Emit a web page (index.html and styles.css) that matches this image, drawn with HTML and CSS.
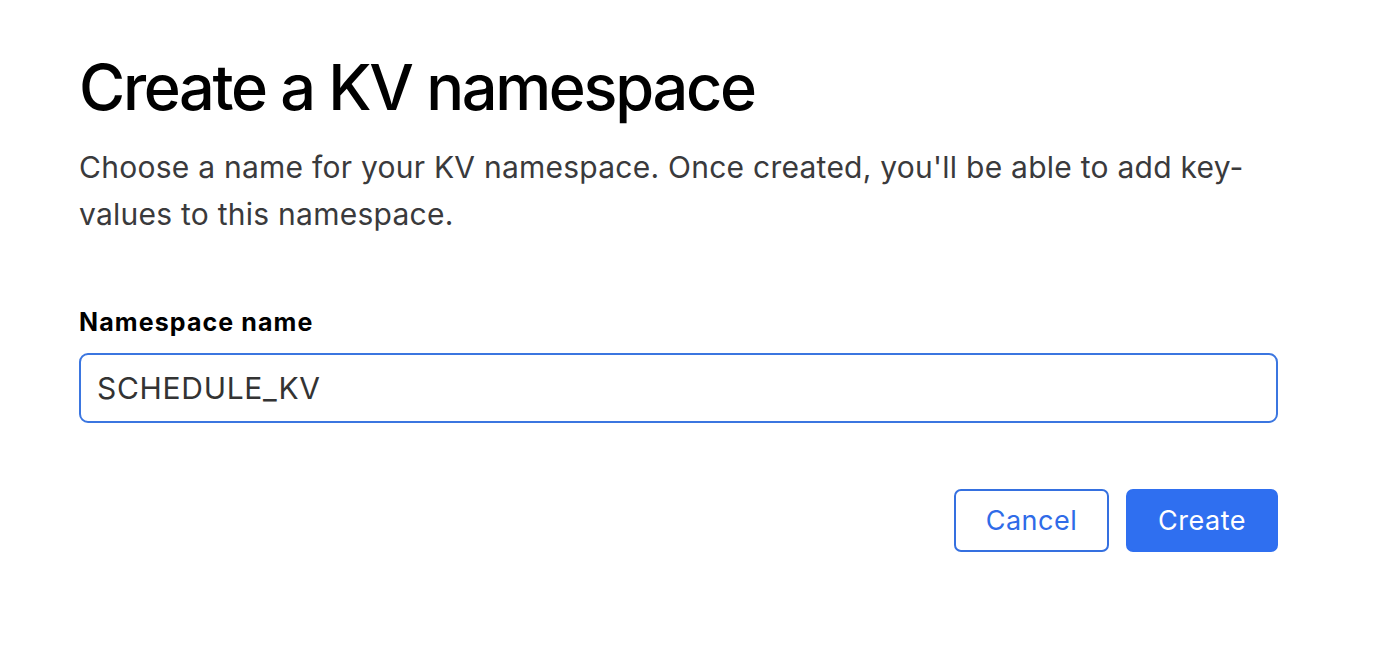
FILE: index.html
```html
<!DOCTYPE html>
<html lang="en">
<head>
<meta charset="utf-8">
<title>Create a KV namespace</title>
<link rel="stylesheet" href="styles.css">
</head>
<body>
<main class="dialog">
  <h1 class="title">Create a KV namespace</h1>
  <p class="desc">Choose a name for your KV namespace. Once created, you'll be able to add key-values to this namespace.</p>
  <form class="form">
    <label class="label" for="ns">Namespace name</label>
    <input class="input" id="ns" type="text" value="SCHEDULE_KV">
    <div class="actions">
      <button type="button" class="btn btn-secondary">Cancel</button>
      <button type="button" class="btn btn-primary">Create</button>
    </div>
  </form>
</main>
</body>
</html>
```

FILE: styles.css
```css
* { box-sizing: border-box; }
html, body { margin: 0; padding: 0; background: #fff; }
body {
  font-family: Inter, "Liberation Sans", Arial, sans-serif;
  color: #1d1d1f;
}
.dialog {
  width: 1199px;
  margin-left: 79px;
  padding-top: 49px;
}
.title {
  margin: 0;
  font-size: 63px;
  font-weight: 500;
  line-height: 76px;
  color: #000;
  letter-spacing: -2.3px;
}
.desc {
  margin: 19px 0 0;
  width: 1180px;
  font-size: 30px;
  line-height: 47px;
  color: #3a3a3c;
  letter-spacing: 0.25px;
}
.form { margin-top: 69px; display: flex; flex-direction: column; }
.label {
  font-size: 25px;
  font-weight: 700;
  line-height: 30px;
  color: #000;
  letter-spacing: 1.1px;
}
.input {
  margin-top: 16px;
  height: 70px;
  width: 100%;
  border: 2px solid #3b76e0;
  border-radius: 9px;
  padding: 0 16px;
  font-family: inherit;
  font-size: 30px;
  letter-spacing: 0.7px;
  color: #333;
  outline: none;
}
.actions {
  margin-top: 66px;
  display: flex;
  justify-content: flex-end;
  gap: 17px;
}
.btn {
  height: 63px;
  border-radius: 7px;
  font-family: inherit;
  font-size: 27px;
  font-weight: 400;
  letter-spacing: 0.5px;
  cursor: pointer;
}
.btn-secondary {
  width: 155px;
  background: #fff;
  border: 2px solid #3570e0;
  color: #2f6be8;
}
.btn-primary {
  width: 152px;
  background: #2f6ff0;
  border: 2px solid #2f6ff0;
  color: #fff;
}
```
